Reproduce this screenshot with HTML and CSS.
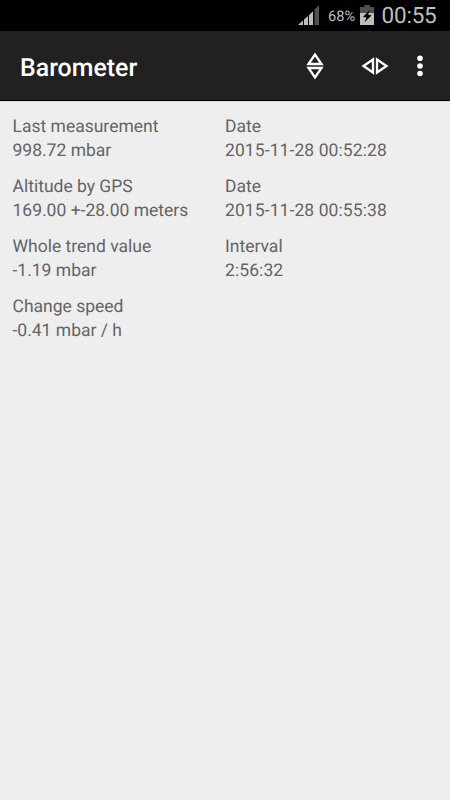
FILE: index.html
```html
<!DOCTYPE html>
<html lang="en">
<head>
<meta charset="utf-8">
<title>Barometer</title>
<link rel="stylesheet" href="styles.css">
</head>
<body>
<div class="status">
  <svg class="signal" width="22" height="20" viewBox="0 0 22 20"><path fill="#bebebe" d="M0 20 5 15.500V20zM6 14.500 10 11v9H6zM11 10l4-3.800V20h-4z"/><path fill="#505050" d="M16.500 4.500 21 0v20h-4.500z"/></svg>
  <span class="percent">68%</span>
  <svg class="battery" width="14" height="20" viewBox="0 0 14 20"><path fill="#505050" d="M4.500 0h5.500v2h4v6H0V2h4.500z"/><path fill="#bebebe" d="M0 8h14v12H0z"/><path fill="#000" d="M9.800 5 3 11.700l3.500 1L4.300 17.500l7.200-7-3.500-1z"/></svg>
  <span class="clock">00:55</span>
</div>
<header class="bar">
  <h1>Barometer</h1>
  <svg class="vertical" width="18" height="28" viewBox="0 0 18 28"><path d="M2.500 12 9 2.500 15.500 12zM2.500 16h13L9 25.500z"/></svg>
  <svg class="horizontal" width="28" height="18" viewBox="0 0 28 18"><path d="M12 2.500v13L2.500 9zM16 2.500v13L25.500 9z"/></svg>
  <svg class="more" width="6" height="22" viewBox="0 0 6 22"><circle cx="3" cy="3.300" r="2.800"/><circle cx="3" cy="11" r="2.800"/><circle cx="3" cy="18.500" r="2.800"/></svg>
</header>
<main class="readings">
  <div>Last measurement<br>998.72 mbar</div>
  <div>Date<br><span class="time">2015-11-28 00:52:28</span></div>
  <div>Altitude by GPS<br>169.00 +-28.00 meters</div>
  <div>Date<br><span class="time">2015-11-28 00:55:38</span></div>
  <div>Whole trend value<br>-1.19 mbar</div>
  <div>Interval<br><span class="time">2:56:32</span></div>
  <div>Change speed<br>-0.41 mbar / h</div>
</main>
</body>
</html>
```
FILE: styles.css
```css
body {
  margin: 0;
  min-height: 800px;
  background: #eee;
  font-family: Roboto, sans-serif;
  text-rendering: geometricPrecision;
}
.status {
  display: flex;
  align-items: center;
  justify-content: flex-end;
  box-sizing: border-box;
  height: 31px;
  padding: 0 14px 1px 0;
  background: #000;
  color: #bebebe;
}
.signal { margin-right: 8px; }
.percent { width: 27px; margin: 2px 4.500px 0 0; font-size: 14.600px; }
.clock { width: 54.500px; margin: 2px 0 0 8px; font-size: 22.500px; letter-spacing: -0.200px; }
.bar {
  display: flex;
  align-items: center;
  box-sizing: border-box;
  height: 70px;
  padding: 0 27px 0 20px;
  border-bottom: 1px solid #000;
  background: #212121;
  color: #fff;
}
h1 { flex: 1; margin: 5px 0 0; font-size: 24.900px; font-weight: 500; }
.vertical, .horizontal { fill: none; stroke: #fff; stroke-width: 2.300; }
.horizontal { margin: 0 28px 0 37.500px; }
.more { fill: #fff; }
.readings {
  display: grid;
  grid-template-columns: 212.500px 1fr;
  row-gap: 12px;
  padding: 13px 0 0 12.500px;
  border-top: 1px solid #e2dde0;
  color: #646464;
  font-size: 17.500px;
  line-height: 24px;
}
.time { letter-spacing: 0.090px; }
```
